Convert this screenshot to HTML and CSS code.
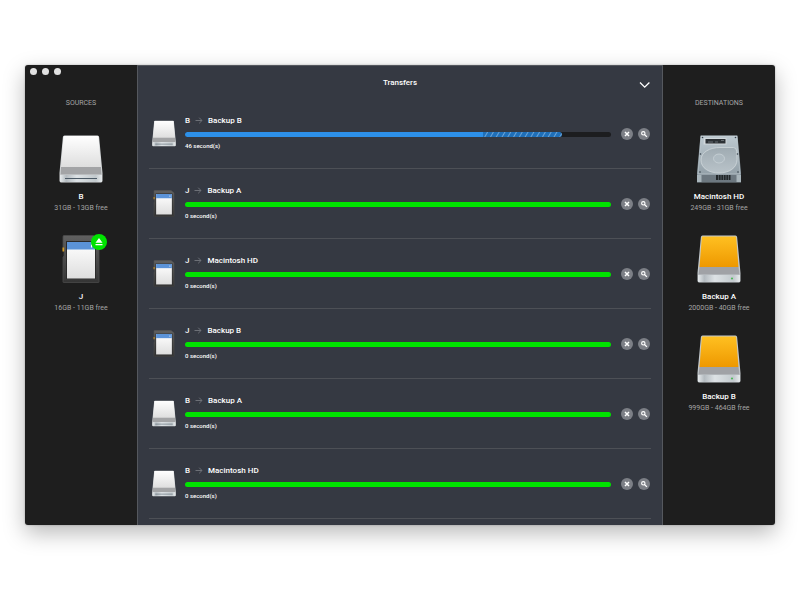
FILE: index.html
```
<!DOCTYPE html>
<html lang="en">
<head>
    <meta charset="UTF-8">
    <meta name="viewport" content="width=device-width, initial-scale=1.0">
    <title>Transfers</title>
    <link rel="stylesheet" href="styles.css">
</head>
<body>
    <svg class="sprite" aria-hidden="true">
        <defs>
            <linearGradient id="whiteTop" x1="0" y1="0" x2="0" y2="1">
                <stop offset="0" stop-color="#ffffff"/>
                <stop offset="1" stop-color="#dedede"/>
            </linearGradient>
            <linearGradient id="orangeTop" x1="0" y1="0" x2="0" y2="1">
                <stop offset="0" stop-color="#ffc021"/>
                <stop offset="1" stop-color="#ee9800"/>
            </linearGradient>
            <linearGradient id="front" x1="0" y1="0" x2="1" y2="0">
                <stop offset="0" stop-color="#e6eaec"/>
                <stop offset="0.15" stop-color="#b4bbc0"/>
                <stop offset="0.4" stop-color="#dde2e5"/>
                <stop offset="0.85" stop-color="#c2c9cd"/>
                <stop offset="1" stop-color="#e6eaec"/>
            </linearGradient>
            <linearGradient id="metal" x1="0" y1="0" x2="0" y2="1">
                <stop offset="0" stop-color="#bdc9d0"/>
                <stop offset="1" stop-color="#94a1a9"/>
            </linearGradient>
            <linearGradient id="platter" x1="0" y1="0" x2="0" y2="1">
                <stop offset="0" stop-color="#9fabb2"/>
                <stop offset="1" stop-color="#b9c3c9"/>
            </linearGradient>
            <linearGradient id="cardBody" x1="0" y1="0" x2="0" y2="1">
                <stop offset="0" stop-color="#606060"/>
                <stop offset="1" stop-color="#353535"/>
            </linearGradient>
        </defs>
        <symbol id="drive" viewBox="0 0 44 48">
            <path d="M5.500 .5h33q1.400 0 1.600 1.500L43.500 38v7.500q0 2-1.500 2H2q-1.500 0-1.500-2V38L3.900 2q.2-1.500 1.600-1.500z" fill="#d3d6d8"/>
            <path d="M5.500 1h33q.9 0 1 1L42 32H2L4.500 2q.1-1 1-1z" fill="url(#whiteTop)"/>
            <path d="M2 32h40l.5 7.500h-41z" fill="#a3a4a6"/>
            <path d="M1 40h42v5.500q0 1.500-1 1.500H2q-1 0-1-1.500z" fill="url(#front)"/>
            <path d="M6 43.500h32" stroke="#4c5a66" stroke-width="1"/>
        </symbol>
        <symbol id="external" viewBox="0 0 44 48">
            <path d="M5.500 .5h33q1.400 0 1.600 1.500L43.500 38v7.500q0 2-1.500 2H2q-1.500 0-1.500-2V38L3.900 2q.2-1.500 1.600-1.500z" fill="#c3c9cd"/>
            <path d="M5.500 1.500h33q.6 0 .7 1L41.500 32h-39L4.800 2.500q.1-1 .7-1z" fill="url(#orangeTop)"/>
            <path d="M2.500 32h39l1 7.500h-41z" fill="#a0a2a6"/>
            <path d="M1 40h42v5.500q0 1.500-1 1.500H2q-1 0-1-1.500z" fill="url(#front)"/>
            <circle cx="35" cy="43.500" r="1.100" fill="#4fb85a"/>
        </symbol>
        <symbol id="internal" viewBox="0 0 44 48">
            <path d="M3.500 .5h37L44 38v9.500H0V38z" fill="#84919a"/>
            <path d="M4 1h36l3 38H1z" fill="url(#metal)" stroke="#cdd6db" stroke-width=".5"/>
            <path d="M4 25C4 17 13 12.500 23 12.500h13.500q3 0 3.200 4l.3 8C40 33 32 38 22 38S4 33 4 25z" fill="url(#platter)" stroke="#d0d8dc" stroke-width=".8"/>
            <ellipse cx="22" cy="23.500" rx="5.500" ry="4.500" fill="#aebac1" stroke="#cdd6da" stroke-width=".7"/>
            <path d="M7 3h22.500v6.500h-23z" fill="#d0d7db"/>
            <path d="M8.500 4h20v4.500h-20z" fill="#2c3135"/>
            <path d="M11 7h5m2 0h3m3-1.500h3" stroke="#767e83" stroke-width=".8"/>
            <path d="M0 40h44v7H0z" fill="#6d7880"/>
            <path d="M0 40h4.500v7H0zm39.500 0H44v7h-4.500z" fill="#a9b5bb"/>
            <path d="M19 40h14.500v5H19z" fill="#22272a"/>
            <path d="M21.500 40v5m2.500-5v5m2.500-5v5m2.500-5v5m2.500-5v5" stroke="#5a646b" stroke-width=".8"/>
            <g fill="#35404a">
                <circle cx="5.500" cy="2.500" r=".8"/><circle cx="38.500" cy="2.500" r=".8"/>
                <circle cx="3.500" cy="19" r=".8"/><circle cx="40.500" cy="19" r=".8"/>
                <circle cx="3" cy="37" r=".8"/><circle cx="41" cy="37" r=".8"/>
            </g>
        </symbol>
        <symbol id="card" viewBox="0 0 38 48">
            <path d="M2 .5h29.500L37 5v42q0 .5-.5 .5H1.500Q1 47.500 1 47V22l1-1v-5l-1-.5V1.500Q1 .5 2 .5z" fill="url(#cardBody)" stroke="#4a4a4a" stroke-width=".8"/>
            <path d="M.5 12.500h1.700v4H.5z" fill="#d29a24"/>
            <path d="M4 6h30v38H4z" fill="#2b2b2b"/>
            <path d="M5 7h28v36.500H5z" fill="url(#whiteTop)"/>
            <path d="M5 7h28v7.500H5z" fill="#5b93d8"/>
            <path d="M29.500 9.500v3" stroke="#fff"/>
        </symbol>
        <symbol id="arrow" viewBox="0 0 8 8">
            <path d="M.5 3.500h6.500M4.200 .7L7 3.500 4.200 6.300" fill="none" stroke="currentColor" stroke-width="1"/>
        </symbol>
        <symbol id="cross" viewBox="0 0 12 12">
            <path d="M4 4l4 4M8 4L4 8" stroke="currentColor" stroke-width="1.500"/>
        </symbol>
        <symbol id="search" viewBox="0 0 12 12">
            <circle cx="5.300" cy="5.300" r="1.700" fill="none" stroke="currentColor" stroke-width="1.100"/>
            <path d="M6.700 6.700L8.900 8.900" stroke="currentColor" stroke-width="1.300"/>
        </symbol>
    </svg>

    <div class="window">
        <aside class="side">
            <div class="lights">
                <button type="button" aria-label="Close"></button>
                <button type="button" aria-label="Minimize"></button>
                <button type="button" aria-label="Zoom"></button>
            </div>
            <h2>SOURCES</h2>
            <ul class="volumes">
                <li>
                    <div class="picture"><svg><use href="#drive"/></svg></div>
                    <strong>B</strong>
                    <span>31GB - 13GB free</span>
                </li>
                <li>
                    <div class="picture">
                        <svg><use href="#card"/></svg>
                        <button type="button" class="eject" aria-label="Eject J">
                            <svg viewBox="0 0 16 16"><path d="M8 4L11.500 8.700h-7zM4.500 10h7v1.300h-7z" fill="#fff"/></svg>
                        </button>
                    </div>
                    <strong>J</strong>
                    <span>16GB - 11GB free</span>
                </li>
            </ul>
        </aside>

        <main>
            <header>
                <h1>Transfers</h1>
                <button type="button" class="collapse" aria-label="Collapse">
                    <svg viewBox="0 0 12 8"><path d="M1 1.500l4.700 4.700 4.700-4.700" fill="none" stroke="#fff" stroke-width="1.300"/></svg>
                </button>
            </header>
            <ul class="transfers" id="transfers"></ul>
        </main>

        <aside class="side">
            <h2>DESTINATIONS</h2>
            <ul class="volumes">
                <li>
                    <div class="picture"><svg><use href="#internal"/></svg></div>
                    <strong>Macintosh HD</strong>
                    <span>249GB - 31GB free</span>
                </li>
                <li>
                    <div class="picture"><svg><use href="#external"/></svg></div>
                    <strong>Backup A</strong>
                    <span>2000GB - 40GB free</span>
                </li>
                <li>
                    <div class="picture"><svg><use href="#external"/></svg></div>
                    <strong>Backup B</strong>
                    <span>999GB - 464GB free</span>
                </li>
            </ul>
        </aside>
    </div>
    <script src="script.js"></script>
</body>
</html>
```
FILE: styles.css
```
* {
    box-sizing: border-box;
}
body {
    margin: 0;
    padding: 65px 25px;
    background-color: #fff;
    font-family: Roboto, "Liberation Sans", sans-serif;
    font-size: 8px;
    line-height: 12px;
    color: #fff;
}
h1,
h2,
ul {
    margin: 0;
    padding: 0;
    list-style: none;
}
button {
    padding: 0;
    border: none;
    background: none;
    color: inherit;
    cursor: pointer;
}
svg {
    display: block;
}
.sprite {
    position: absolute;
    width: 0;
    height: 0;
}
.window {
    display: grid;
    grid-template-columns: 112px 1fr 112px;
    border-radius: 3px;
    overflow: hidden;
    background-color: #1e1e1e;
    box-shadow: 0 8px 22px rgba(0, 0, 0, 0.28), 0 0 2px rgba(0, 0, 0, 0.3);
}

/* side columns */
.side {
    position: relative;
    padding-top: 32px;
    text-align: center;
}
.side h2 {
    font-size: 7px;
    font-weight: 400;
    color: #a5a5a5;
}
.lights {
    position: absolute;
    top: 3px;
    left: 5px;
    display: flex;
    gap: 5px;
}
.lights button {
    width: 7px;
    height: 7px;
    border-radius: 50%;
    background-color: #e2e2e2;
}
.volumes {
    display: flex;
    flex-direction: column;
    gap: 20px;
    padding-top: 26px;
}
.volumes li {
    display: flex;
    flex-direction: column;
    align-items: center;
}
.picture {
    position: relative;
    width: 44px;
    height: 48px;
    margin-bottom: 8px;
}
.picture svg {
    width: 100%;
    height: 100%;
}
.volumes strong {
    font-weight: 500;
}
.volumes span {
    font-size: 7px;
    line-height: 11px;
    margin-bottom: 1px;
    color: #a5a5a5;
}
.eject {
    position: absolute;
    top: -1px;
    right: -4px;
    width: 16px;
    height: 16px;
    border-radius: 50%;
    background-color: #00e300;
}

/* transfer list */
main {
    padding: 0 11px 6px;
    border: solid #55585e;
    border-width: 1px 1px 0;
    background-color: #353942;
}
header {
    display: flex;
    align-items: center;
    justify-content: center;
    position: relative;
    height: 33px;
}
h1 {
    font-size: 8px;
    font-weight: 500;
}
.collapse {
    position: absolute;
    right: 0;
    bottom: 10px;
    width: 12px;
    height: 8px;
}
.transfers li {
    display: flex;
    align-items: center;
    height: 70px;
    padding: 0 1px 0 3px;
    border-bottom: 1px solid #4d5056;
}
.thumb {
    width: 24px;
    height: 27px;
    margin-right: 9px;
}
.info {
    flex: 1;
    padding-bottom: 1px;
}
.route {
    display: flex;
    align-items: center;
    gap: 5px;
    font-weight: 500;
}
.route svg {
    width: 8px;
    height: 8px;
    color: #6d7077;
}
.bar {
    display: flex;
    height: 5px;
    margin: 5px 0 4px;
    border-radius: 3px;
    overflow: hidden;
    background-color: #1c1d1f;
}
.done {
    background-color: #00e300;
}
.running .done {
    background-color: #2d90e8;
}
.pending {
    border-radius: 0 3px 3px 0;
    background: repeating-linear-gradient(120deg, #1f6fb8 0, #1f6fb8 3px, #6aa3d6 4px, #1f6fb8 5px);
}
.time {
    font-size: 6px;
    line-height: 10px;
    font-weight: 500;
}
.actions {
    display: flex;
    gap: 5px;
    margin-left: 10px;
}
.actions button {
    width: 12px;
    height: 12px;
    border-radius: 50%;
    background-color: #7c7f86;
}
.actions svg {
    width: 12px;
    height: 12px;
}
```
FILE: script.js
```
const transfers = [
    { icon: 'drive', from: 'B', to: 'Backup B', done: 70, pending: 18.5, seconds: 46 },
    { icon: 'card', from: 'J', to: 'Backup A', done: 100, pending: 0, seconds: 0 },
    { icon: 'card', from: 'J', to: 'Macintosh HD', done: 100, pending: 0, seconds: 0 },
    { icon: 'card', from: 'J', to: 'Backup B', done: 100, pending: 0, seconds: 0 },
    { icon: 'drive', from: 'B', to: 'Backup A', done: 100, pending: 0, seconds: 0 },
    { icon: 'drive', from: 'B', to: 'Macintosh HD', done: 100, pending: 0, seconds: 0 }
];

document.getElementById('transfers').innerHTML = transfers.map(t => `
    <li class="${t.done < 100 ? 'running' : ''}">
        <svg class="thumb"><use href="#${t.icon}"/></svg>
        <div class="info">
            <div class="route">
                <span>${t.from}</span>
                <svg><use href="#arrow"/></svg>
                <span>${t.to}</span>
            </div>
            <div class="bar" role="progressbar" aria-label="${t.from} to ${t.to}" aria-valuenow="${t.done}">
                <div class="done" style="width: ${t.done}%"></div>
                <div class="pending" style="width: ${t.pending}%"></div>
            </div>
            <div class="time">${t.seconds} second(s)</div>
        </div>
        <div class="actions">
            <button type="button" aria-label="Cancel"><svg><use href="#cross"/></svg></button>
            <button type="button" aria-label="Show"><svg><use href="#search"/></svg></button>
        </div>
    </li>
`).join('');
```
